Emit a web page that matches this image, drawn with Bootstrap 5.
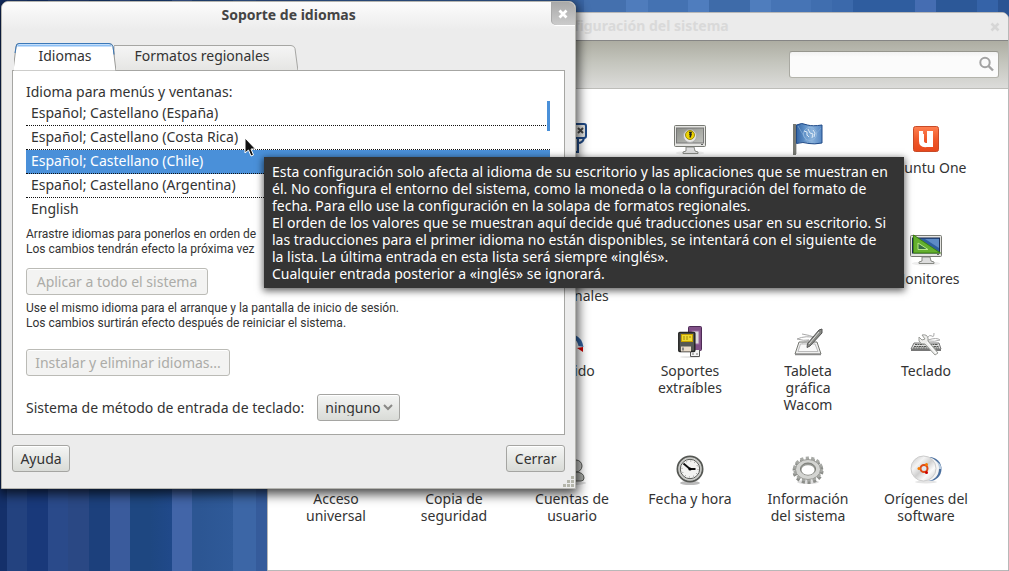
<!DOCTYPE html>
<html lang="es">
<head>
<meta charset="utf-8">
<meta name="viewport" content="width=device-width, initial-scale=1">
<title>Soporte de idiomas</title>
<link href="https://cdn.jsdelivr.net/npm/bootstrap@5.3.0/dist/css/bootstrap.min.css" rel="stylesheet">
<style>
  :root { --ink: #333; --line: #a6a6a3; --face: #ececec; --blue: #4a90d9; }
  body {
    font: 14px/17px "Noto Sans", "Open Sans", sans-serif; color: var(--ink);
    min-height: 100vh; overflow: hidden;
    background:
      linear-gradient(90deg,
        #14306a 0 7px, #23427f 7px 27px, #19397a 27px 48px, #2a4a8a 48px 68px, #2a4884 68px 89px,
        #1c407c 89px 110px, #3a5b9c 110px 130px, #1e4781 130px 150px, #20498a 172px, #4265a8 172px 192px,
        #2c5693 192px 200px, #2f5a99 233px, #3c66a6 233px 256px, #355b9b 256px 300px, #3a66a6 300px 584px,
        #4470ae 584px 626px, #4f7cbc 626px 648px, #4472b2 648px 688px, #4f7dbe 688px 709px,
        #3e6ba9 709px 750px, #4f7dbd 750px 771px, #4674b5 771px 811px, #406eaf 811px 832px,
        #3b69ab 832px 853px, #2f5d9f 853px 915px, #456db2 915px 936px, #2c5898 936px 977px,
        #3563a8 977px 998px, #2b5493 998px);
  }
  .win { position: absolute; background: #fff; border: 1px solid #b8b8b8; border-radius: 7px 7px 0 0; }
  .win-system { left: 267px; right: 0; top: 12px; bottom: 0; }
  .win-language { left: 1px; top: 1px; width: 57%; background: var(--face); border-color: #b5b5b0; box-shadow: 0 3px 12px 2px rgba(0,0,0,.75); }
  .titlebar { height: 28px; padding-bottom: 2px; font-weight: 700; }
  .win-system .titlebar { background: #ebebeb; color: #d9d9d9; border-bottom: 1px solid #858585; border-radius: 6px 6px 0 0; }
  .win-language .titlebar { padding-bottom: 4px; background: linear-gradient(#fcfcfc, var(--face)); border-radius: 6px 6px 0 0; color: #444; }
  .close-btn { position: absolute; right: 0; top: 0; padding: 0; border: 0; line-height: 0; background: none; }
  .win-language .close-btn { width: 24px; height: 24px; background: linear-gradient(#a9a9a9, #cbcbcb); border: 1px solid #fff; border-width: 0 0 1px; border-radius: 0 6px 0 5px; box-shadow: inset 1px 0 #aaa; }
  .win-system .close-btn { width: 26px; height: 28px; }
  .toolbar { height: 48px; background: linear-gradient(#adada2, #c4c5bd 45%, #dcdcda); border-bottom: 1px solid #bdbdb9; padding-right: 9px; }
  .search-wrap { position: relative; width: 210px; }
  .search-wrap .form-control { height: 27px; padding: 0 30px 0 8px; border: 1px solid #9f9f97; border-color: #96968e #a9a9a2 #b4b4ac; border-radius: 3px; background: linear-gradient(#f2f2f2, #fbfbfb 5px); font-size: 14px; }
  .search-wrap svg { position: absolute; right: 4px; top: 5px; }
  .panel-grid { padding: 34px 23px 0 9px; }
  .section-row { min-height: 71px; margin-bottom: 40px; }
  .near-row { margin-bottom: 21px; }
  .tall-row { min-height: 88px; }
  .launcher { color: var(--ink); text-decoration: none; text-align: center; display: block; min-height: 71px; }
  .launcher svg, .icon-space { display: block; height: 32px; margin: 0 auto 4px; }
  .tabs { padding: 0 2px; height: 27px; align-items: flex-end; position: relative; }
  .tab-btn { border: 0; background: none; padding: 0 0 3px; position: relative; color: var(--ink); }
  .tab-btn svg { position: absolute; left: 0; bottom: 0; width: 100%; height: 100%; }
  .tab-btn span { position: relative; }
  .tab-on { width: 102px; height: 28px; margin-bottom: -1px; z-index: 1; }
  .tab-off { width: 184px; height: 25px; margin-left: -2px; padding: 0 8px 4px 0; }
  .main { padding: 13px 10px 16px; }
  .pane { background: #fff; border: 1px solid var(--line); padding: 12px 14px 13px 13px; margin-bottom: 10px; }
  .list-label { display: block; margin-bottom: 2px; }
  .lang-list { position: relative; margin-bottom: 5px; }
  .lang-list .list-group-item { height: 24px; padding: 2px 5px; border: 0; border-bottom: 1px dotted #111; border-radius: 0; color: var(--ink); background: none; }
  .lang-list .list-group-item:last-of-type { border-bottom: 0; }
  .lang-list .list-group-item.active { background: var(--blue); color: #fff; margin-top: 0; }
  .drop-mark { position: absolute; right: 0; top: -1px; width: 3px; height: 30px; background: var(--blue); z-index: 2; }
  .note { font-family: Roboto, "Noto Sans", sans-serif; font-size: 12px; line-height: 15px; }
  .note-order { margin-bottom: 11px; }
  .note-apply { margin: 6px 0 18px; }
  .method-row { margin-top: 18px; gap: 13px; }
  .gtk { display: block; height: 27px; padding: 0 5px; font-size: 14px; line-height: 17px; color: var(--ink); border: 1px solid #a5a5a2; border-radius: 3px; background: linear-gradient(#f4f5f4, #d9dbd7); box-shadow: inset 0 1px #fff; white-space: nowrap; }
  .gtk:disabled { color: #acaca8; border-color: #bbbbb6; background: #f3f3f2; opacity: 1; }
  .w-apply { width: 182px; } .w-install { width: 204px; } .w-help { width: 58px; } .w-close { width: 59px; }
  select.gtk { width: 83px; padding: 0 16px 0 7px; appearance: none;
    background: url("data:image/svg+xml,%3Csvg xmlns='http://www.w3.org/2000/svg' width='10' height='7'%3E%3Cpath d='M1 1l4 4 4-4' fill='none' stroke='%23898986' stroke-width='2'/%3E%3C/svg%3E") no-repeat right 6px center, linear-gradient(#f4f5f4, #d9dbd7); }
  .grip { position: absolute; right: 1px; bottom: 1px; }
  .tip { position: absolute; left: 264px; top: 157px; width: 640px; padding: 6px 8px; background: #343434; color: #fff; box-shadow: 0 2px 7px 1px rgba(0,0,0,.6); white-space: nowrap; z-index: 5; }
  .pointer { position: absolute; left: 244px; top: 137px; z-index: 6; }
</style>
</head>
<body>

<section class="win win-system d-flex flex-column" aria-label="Configuración del sistema">
  <header class="titlebar d-flex align-items-center justify-content-center flex-shrink-0">Configuración del sistema
    <button class="close-btn" type="button" aria-label="Cerrar ventana"><svg width="10" height="10" viewBox="0 0 10 10"><path d="M1.500 1.500l7 7M8.500 1.500l-7 7" stroke="#d6d6d6" stroke-width="2.600"/></svg></button>
  </header>
  <div class="toolbar d-flex align-items-center justify-content-end flex-shrink-0">
    <div class="search-wrap">
      <input class="form-control" type="text" aria-label="Buscar">
      <svg width="17" height="17" viewBox="0 0 17 17" fill="none" stroke="#a3a3a3"><circle cx="7" cy="6.500" r="4.700" stroke-width="2"/><path d="M10.500 10l4.500 4.500" stroke-width="2.400"/></svg>
    </div>
  </div>
  <main class="panel-grid">
    <div class="row row-cols-6 g-0 section-row">
      <div class="col offset-4"><a class="launcher" href="#" aria-label="Teclado">
        <svg width="32" height="32" viewBox="0 0 32 32"><rect x="1" y="1" width="29" height="14" rx="2" fill="#e5e5e2" stroke="#204a87" stroke-width="2"/><path d="M22 5l5 5m0-5l-5 5" stroke="#444" stroke-width="2"/><path d="M4 16v13h18V16m0 4q5 0 6-5" fill="#d6d6d3" stroke="#204a87" stroke-width="2"/></svg></a></div>
      <div class="col"><a class="launcher" href="#" aria-label="Pantalla">
        <svg width="32" height="32" viewBox="0 0 32 32"><defs><linearGradient id="scr" x2="1" y2="1"><stop stop-color="#8b8d87"/><stop offset="1" stop-color="#c0c2bd"/></linearGradient></defs><ellipse cx="16" cy="30" rx="14" ry="2" fill="#eee"/><path d="M12 24h8l1 4 3 1v1.500H9V29l3-1z" fill="#ddd" stroke="#888a85"/><rect x=".5" y="2.500" width="31" height="21" rx="1" fill="#e4e4e1" stroke="#777973"/><rect x="2.500" y="5" width="27" height="15" fill="url(#scr)" stroke="#777"/><circle cx="16" cy="13" r="6.500" fill="#e7e7e5" stroke="#aaa"/><circle cx="16" cy="12" r="4.500" fill="#edd400" stroke="#9c8a10"/><path d="M15 9.500h2l-1 2h1l-1 3" fill="none" stroke="#222" stroke-width="1.500"/><path d="M27 21.500h2" stroke="#666"/></svg></a></div>
      <div class="col"><a class="launcher" href="#" aria-label="Idiomas">
        <svg width="32" height="32" viewBox="0 0 32 32"><defs><linearGradient id="flg" x2="1"><stop stop-color="#3465a4"/><stop offset=".35" stop-color="#6294ca"/><stop offset=".6" stop-color="#8bb3dc"/><stop offset="1" stop-color="#5586c2"/></linearGradient></defs><path d="M2.500 1v31" stroke="#777973" stroke-width="3"/><path d="M4.500 1v30" stroke="#ccc"/><path d="M4.500 2q5-3 11 0 5 1.500 14.500 0v18q-8 1.500-13 .5-6-2-12.500 0z" fill="url(#flg)" stroke="#204a87"/><path d="M6 3l10 17M17 3l-4 15M29 5L17 19" stroke="#86acd6" opacity=".7"/><circle cx="18" cy="11" r="6.500" fill="none" stroke="#8fb5dd"/><path d="M12 8l3 1v3l2 2M16 6l2 4 3 1-1 4M21 7l2 3-1 4" fill="none" stroke="#dfebf7"/></svg></a></div>
      <div class="col"><a class="launcher" href="#">
        <svg width="32" height="32" viewBox="0 0 32 32"><defs><linearGradient id="u1" x2="0" y2="1"><stop stop-color="#ff8050"/><stop offset=".5" stop-color="#f05a2c"/><stop offset="1" stop-color="#e7471b"/></linearGradient></defs><rect x="3.500" y="3.500" width="25" height="25" rx="2" fill="url(#u1)" stroke="#c84a27"/><path d="M9 8h5v10q0 2 3 2V8h6v16h-6Q9 25 9 18z" fill="#fff"/><path d="M13.500 7v4" stroke="#f47a54"/></svg>
        Ubuntu One</a></div>
    </div>
    <div class="row row-cols-6 g-0 near-row">
      <div class="col offset-4"><a class="launcher" href="#">
        <span class="icon-space"></span>
        <br>adicionales</a></div>
      <div class="col offset-4"><a class="launcher" href="#">
        <svg width="32" height="32" viewBox="0 0 32 32"><ellipse cx="16" cy="29.500" rx="14" ry="2" fill="#eee"/><path d="M12 23h8l1 4 3 1v1.500H9V28l3-1z" fill="#ddd" stroke="#888a85"/><rect x=".5" y="1.500" width="31" height="21" rx="1" fill="#e4e4e1" stroke="#777973"/><rect x="2.500" y="4" width="27" height="15" fill="#2f5f9f" stroke="#1b2d55"/><path d="M15 5h14v9z" fill="#5d8bc6"/><path d="M3.500 1v18h27z" fill="#64b02f" stroke="#3c8010"/><path d="M8 9v6.500h10z" fill="#386f45" stroke="#b8e986"/><path d="M27 20.500h2" stroke="#666"/></svg>
        Monitores</a></div>
    </div>
    <div class="row row-cols-6 g-0 section-row tall-row">
      <div class="col offset-4"><a class="launcher" href="#">
        <svg width="32" height="32" viewBox="0 0 32 32"><rect x="4" y="7" width="15" height="18" rx="5" fill="#aaa" stroke="#444" stroke-width="2"/><path d="M19 9q7 3 8.500 12l-5-1q-1-5-4-7z" fill="#3465a4"/><path d="M21 22l6-1v5z" fill="#c00"/></svg>
        Sonido</a></div>
      <div class="col"><a class="launcher" href="#">
        <svg width="32" height="32" viewBox="0 0 32 32"><ellipse cx="16" cy="31" rx="10" ry="1" fill="#e5e5e5"/><rect x="14.500" y=".5" width="13" height="24" rx="1" fill="#805087" stroke="#4d2b55"/><rect x="18" y="5" width="7" height="13" fill="#ddd" stroke="#9a6aa0"/><path d="M16.500 24v6.500h9V24" fill="#f4f4f4" stroke="#555"/><path d="M18 28h2m2 0h2" stroke="#777"/><rect x="4.800" y="6.500" width="16" height="19" rx="1" fill="#555753" stroke="#252625" stroke-width="1.500"/><rect x="7.500" y="8.500" width="11" height="7" fill="#edd932" stroke="#c4a000"/><path d="M9 11h8M9 13h6" stroke="#a28806" stroke-dasharray="2 1"/><rect x="7" y="20.500" width="10" height="5" fill="#e9dccb"/><rect x="8" y="21.500" width="2" height="3" fill="#888"/></svg>
        Soportes<br>extraíbles</a></div>
      <div class="col"><a class="launcher" href="#">
        <svg width="32" height="32" viewBox="0 0 32 32"><path d="M7 16h18l4 12H3z" fill="#eee" stroke="#777973"/><path d="M8.500 18h14.500l3 7.500H6z" fill="#f8f8f8" stroke="#bbb"/><path d="M3 28.500h26" stroke="#888" stroke-width="1.500"/><path d="M10 8q8 1 14 4Q14 9 5 13q7 2 12 1-4 2-7 3" fill="none" stroke="#aaa"/><path d="M27 4l3-1v4L18 20l-3 1.500.5-4z" fill="#888a85" stroke="#555"/><path d="M27 6L17 18" stroke="#ddd"/></svg>
        Tableta<br>gráfica<br>Wacom</a></div>
      <div class="col"><a class="launcher" href="#">
        <svg width="32" height="32" viewBox="0 0 32 32"><path d="M4 17h25l2 6H1z" fill="#ddd" stroke="#777"/><path d="M5 18.500h23M4 20.500h25M3 22h26" stroke="#555753" stroke-width="1.200" stroke-dasharray="2 .5"/><path d="M1 24h30" stroke="#777" stroke-width="2"/><path d="M17 12q3-4 5-2t2-3M18 14q9-3 12 0-5 2-12 1" fill="none" stroke="#aaa"/><path d="M12 9q5-1 6 3v3l10 12-3 2-10-11q-4 1-6-3v-4l3 3 3-1z" fill="#ededeb" stroke="#999b97"/><path d="M17 16l9 11" stroke="#fff"/></svg>
        Teclado</a></div>
    </div>
    <div class="row row-cols-6 g-0">
      <div class="col"><a class="launcher" href="#">
        <span class="icon-space"></span>
        Acceso<br>universal</a></div>
      <div class="col"><a class="launcher" href="#">
        <span class="icon-space"></span>
        Copia de<br>seguridad</a></div>
      <div class="col"><a class="launcher" href="#">
        <svg width="32" height="32" viewBox="0 0 32 32"><ellipse cx="16" cy="29" rx="14" ry="2" fill="#ddd"/><circle cx="20" cy="12" r="6" fill="#c4c5c2" stroke="#555753"/><path d="M11 27q0-9 8-9 9 0 9 6 0 3-3 3z" fill="#aeb0ac" stroke="#555753"/></svg>
        Cuentas de<br>usuario</a></div>
      <div class="col"><a class="launcher" href="#">
        <svg width="32" height="32" viewBox="0 0 32 32"><ellipse cx="16" cy="29" rx="10" ry="2" fill="#bbb"/><circle cx="16" cy="15" r="12.500" fill="#888a85" stroke="#555753" stroke-width="2"/><circle cx="16" cy="15" r="11" fill="#f3f3f1" stroke="#c9cac7" stroke-width="1.500"/><circle cx="16" cy="15" r="9.700" fill="none" stroke="#555753"/><circle cx="16" cy="15" r="8" fill="none" stroke="#888" stroke-dasharray="1 3.190"/><path d="M9.500 9.500L16 15h5.500" fill="none" stroke="#111" stroke-width="1.800"/><circle cx="16" cy="15" r="1.600"/></svg>
        Fecha y hora</a></div>
      <div class="col"><a class="launcher" href="#">
        <svg width="32" height="32" viewBox="0 0 32 32"><ellipse cx="16" cy="28" rx="11" ry="2" fill="#ddd"/><ellipse cx="16" cy="17" rx="13.500" ry="11" fill="none" stroke="#8b8d89" stroke-width="4" stroke-dasharray="3 2.550"/><ellipse cx="16" cy="15" rx="13" ry="10.500" fill="none" stroke="#a7a9a5" stroke-width="4" stroke-dasharray="3 2.300"/><ellipse cx="16" cy="15.500" rx="12.500" ry="10" fill="#d3d4d1" stroke="#999a96"/><ellipse cx="16" cy="15" rx="7.500" ry="6" fill="#999b97" stroke="#777973"/><ellipse cx="16" cy="16" rx="6.500" ry="4.800" fill="#fff"/></svg>
        Información<br>del sistema</a></div>
      <div class="col"><a class="launcher" href="#">
        <svg width="32" height="32" viewBox="0 0 32 32"><defs><linearGradient id="cd" x2="1" y2="1"><stop stop-color="#c4c4c4"/><stop offset=".3" stop-color="#f4f4f4"/><stop offset=".5" stop-color="#d0d0d0"/><stop offset=".7" stop-color="#fafafa"/><stop offset="1" stop-color="#c8c8c8"/></linearGradient></defs><ellipse cx="16" cy="28" rx="11" ry="1.500" fill="#e5e5e5"/><circle cx="19.500" cy="15" r="12" fill="#4a6f9e"/><path d="M22 7q8 3 8 8" fill="none" stroke="#b9cce0" stroke-width="3"/><circle cx="17" cy="15" r="12" fill="#f4f4f4"/><circle cx="13.500" cy="14.500" r="12.500" fill="url(#cd)" stroke="#ccc"/><circle cx="14" cy="14.500" r="3.500" fill="#dfe8f2" stroke="#df4a16" stroke-width="2"/><g fill="#f57900"><circle cx="9" cy="14.500" r="1.500"/><circle cx="16.500" cy="10.500" r="1.500"/><circle cx="16.500" cy="18.500" r="1.500" fill="#c00"/></g></svg>
        Orígenes del<br>software</a></div>
    </div>
  </main>
</section>

<section class="win win-language" role="dialog" aria-labelledby="dlg-title">
  <header class="titlebar d-flex align-items-center justify-content-center"><span id="dlg-title">Soporte de idiomas</span>
    <button class="close-btn" type="button" aria-label="Cerrar ventana"><svg width="10" height="10" viewBox="0 0 10 10"><path d="M1.500 1.500l7 7M8.500 1.500l-7 7" stroke="#fff" stroke-width="2.800"/></svg></button>
  </header>
  <div class="main">
    <div class="tabs d-flex" role="tablist">
      <button class="tab-btn tab-on" type="button" role="tab" aria-selected="true">
        <svg viewBox="0 0 102 28" preserveAspectRatio="none"><path d="M-1 28L2 4Q2 .5 5 .5h90q3 0 4 3L102 28z" fill="#fff" stroke="#9a9a97"/><path d="M3 3.500Q3 1.500 5 1.500h90q2 0 3 2z" fill="#8dc0f5"/><path d="M1 10l1-6Q2 .5 5 .5h90q3 0 4 3l1 8" fill="none" stroke="#3b78b8"/></svg>
        <span>Idiomas</span></button>
      <button class="tab-btn tab-off" type="button" role="tab" aria-selected="false">
        <svg viewBox="0 0 184 25" preserveAspectRatio="none"><defs><linearGradient id="tb" x2="0" y2="1"><stop stop-color="#f5f5f5"/><stop offset="1" stop-color="#e5e5e3"/></linearGradient></defs><path d="M0 26V.5h177q3 0 4 3L184 26" fill="url(#tb)" stroke="#a6a6a3"/></svg>
        <span>Formatos regionales</span></button>
    </div>
    <div class="pane">
      <label id="list-label" class="list-label">Idioma para menús y ventanas:</label>
      <div class="list-group lang-list" role="listbox" aria-labelledby="list-label">
        <div class="list-group-item" role="option">Español; Castellano (España)</div>
        <div class="list-group-item" role="option">Español; Castellano (Costa Rica)</div>
        <div class="list-group-item active" role="option" aria-selected="true">Español; Castellano (Chile)</div>
        <div class="list-group-item" role="option">Español; Castellano (Argentina)</div>
        <div class="list-group-item" role="option">English</div>
        <span class="drop-mark"></span>
      </div>
      <p class="note note-order">Arrastre idiomas para ponerlos en orden de<br>Los cambios tendrán efecto la próxima vez</p>
      <button class="btn gtk w-apply" type="button" disabled>Aplicar a todo el sistema</button>
      <p class="note note-apply">Use el mismo idioma para el arranque y la pantalla de inicio de sesión.<br>Los cambios surtirán efecto después de reiniciar el sistema.</p>
      <button class="btn gtk w-install" type="button" disabled>Instalar y eliminar idiomas...</button>
      <div class="d-flex align-items-center method-row">
        <label for="method">Sistema de método de entrada de teclado:</label>
        <select id="method" class="gtk"><option>ninguno</option></select>
      </div>
    </div>
    <div class="footer-bar d-flex justify-content-between">
      <button class="btn gtk w-help" type="button">Ayuda</button>
      <button class="btn gtk w-close" type="button">Cerrar</button>
    </div>
  </div>
  <svg class="grip" width="12" height="12" viewBox="0 0 12 12" fill="#b4b5aa"><path d="M9 1h3v3H9zM5 5h3v3H5zM9 5h3v3H9zM1 9h3v3H1zM5 9h3v3H5zM9 9h3v3H9z"/></svg>
</section>

<div class="tip" role="tooltip">Esta configuración solo afecta al idioma de su escritorio y las aplicaciones que se muestran en<br>él. No configura el entorno del sistema, como la moneda o la configuración del formato de<br>fecha. Para ello use la configuración en la solapa de formatos regionales.<br>El orden de los valores que se muestran aquí decide qué traducciones usar en su escritorio. Si<br>las traducciones para el primer idioma no están disponibles, se intentará con el siguiente de<br>la lista. La última entrada en esta lista será siempre «inglés».<br>Cualquier entrada posterior a «inglés» se ignorará.</div>

<svg class="pointer" width="13" height="20" viewBox="0 0 13 20"><path d="M1 1v15l3.500-3 2.500 6 2.500-1-2.500-6h4.500z" fill="#111" stroke="#fff"/></svg>

<script src="https://cdn.jsdelivr.net/npm/bootstrap@5.3.0/dist/js/bootstrap.bundle.min.js"></script>
</body>
</html>
